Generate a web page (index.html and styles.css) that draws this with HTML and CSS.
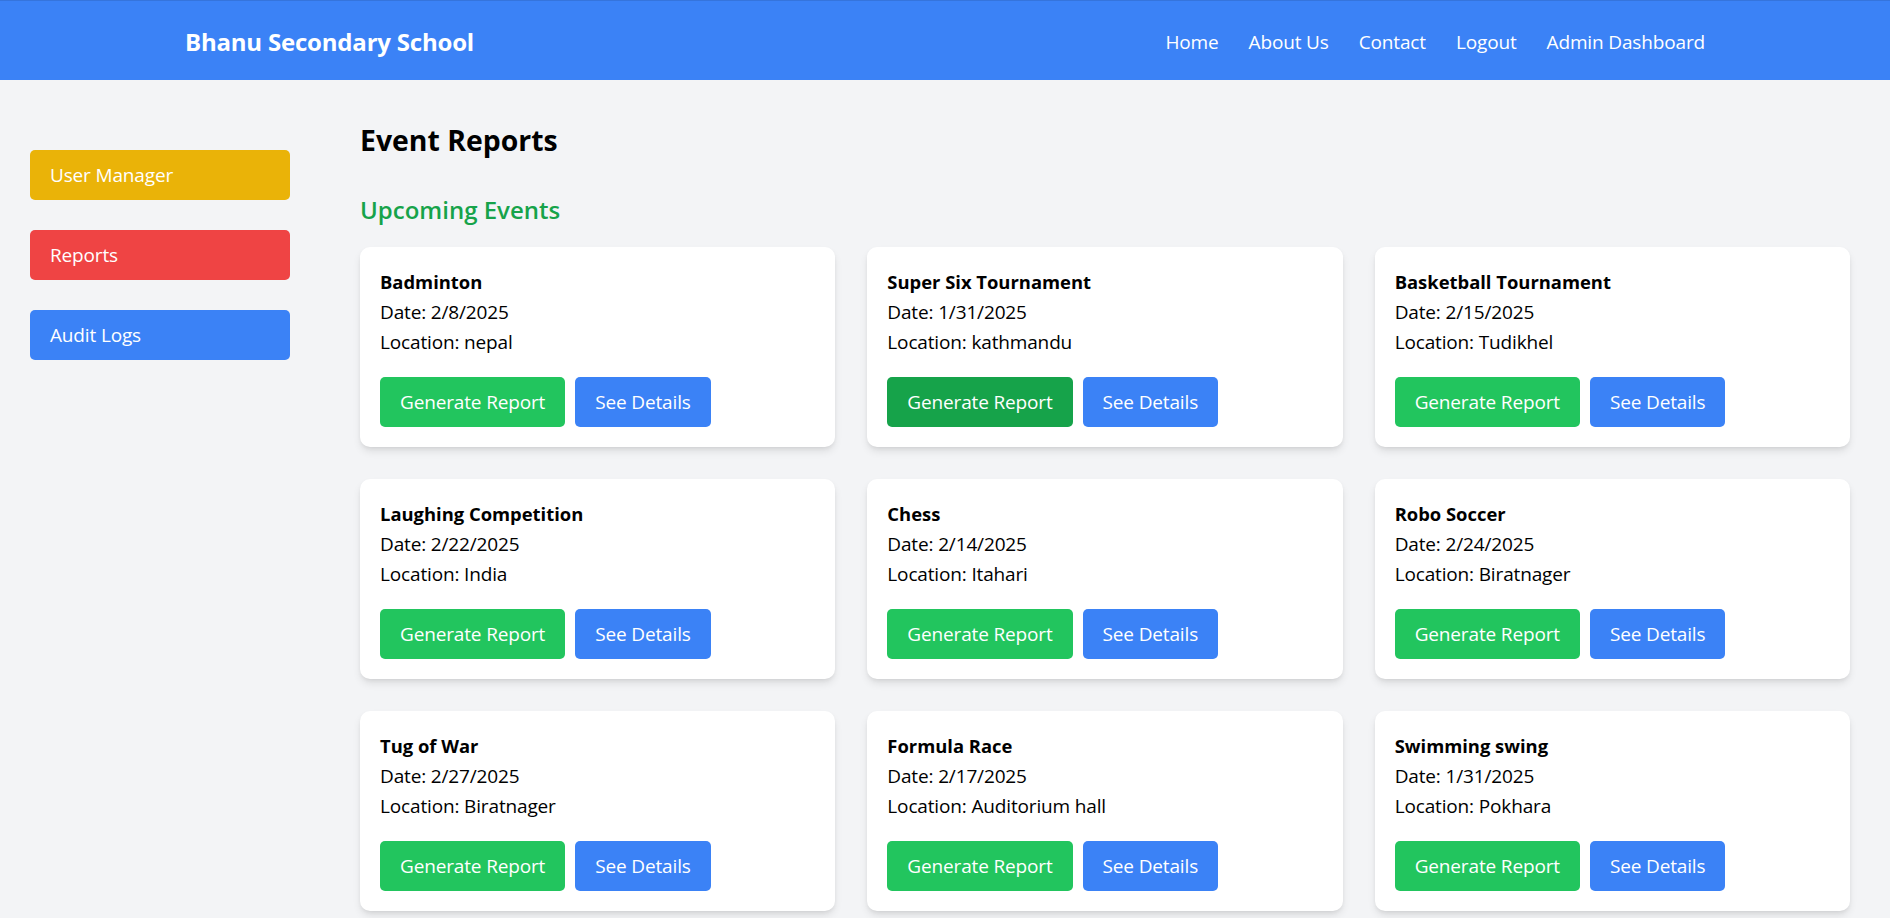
FILE: index.html
```html
<!DOCTYPE html>
<html lang="en">
<head>
<meta charset="utf-8">
<title>Event Reports</title>
<link rel="stylesheet" href="styles.css">
</head>
<body>
<header class="topbar">
  <div class="container">
    <div class="brand">Bhanu Secondary School</div>
    <nav class="nav">
      <a href="#">Home</a>
      <a href="#">About Us</a>
      <a href="#">Contact</a>
      <a href="#">Logout</a>
      <a href="#">Admin Dashboard</a>
    </nav>
  </div>
</header>
<div class="layout">
  <aside class="sidebar">
    <a class="side-btn yellow" href="#">User Manager</a>
    <a class="side-btn red" href="#">Reports</a>
    <a class="side-btn blue" href="#">Audit Logs</a>
  </aside>
  <main class="main">
    <h1 class="page-title">Event Reports</h1>
    <h2 class="section-title">Upcoming Events</h2>
    <div class="grid">
      <div class="card">
        <h3 class="card-title">Badminton</h3>
        <p>Date: 2/8/2025</p>
        <p>Location: nepal</p>
        <div class="actions"><button class="btn green">Generate Report</button><button class="btn blue">See Details</button></div>
      </div>
      <div class="card">
        <h3 class="card-title">Super Six Tournament</h3>
        <p>Date: 1/31/2025</p>
        <p>Location: kathmandu</p>
        <div class="actions"><button class="btn green hover">Generate Report</button><button class="btn blue">See Details</button></div>
      </div>
      <div class="card">
        <h3 class="card-title">Basketball Tournament</h3>
        <p>Date: 2/15/2025</p>
        <p>Location: Tudikhel</p>
        <div class="actions"><button class="btn green">Generate Report</button><button class="btn blue">See Details</button></div>
      </div>
      <div class="card">
        <h3 class="card-title">Laughing Competition</h3>
        <p>Date: 2/22/2025</p>
        <p>Location: India</p>
        <div class="actions"><button class="btn green">Generate Report</button><button class="btn blue">See Details</button></div>
      </div>
      <div class="card">
        <h3 class="card-title">Chess</h3>
        <p>Date: 2/14/2025</p>
        <p>Location: Itahari</p>
        <div class="actions"><button class="btn green">Generate Report</button><button class="btn blue">See Details</button></div>
      </div>
      <div class="card">
        <h3 class="card-title">Robo Soccer</h3>
        <p>Date: 2/24/2025</p>
        <p>Location: Biratnager</p>
        <div class="actions"><button class="btn green">Generate Report</button><button class="btn blue">See Details</button></div>
      </div>
      <div class="card">
        <h3 class="card-title">Tug of War</h3>
        <p>Date: 2/27/2025</p>
        <p>Location: Biratnager</p>
        <div class="actions"><button class="btn green">Generate Report</button><button class="btn blue">See Details</button></div>
      </div>
      <div class="card">
        <h3 class="card-title">Formula Race</h3>
        <p>Date: 2/17/2025</p>
        <p>Location: Auditorium hall</p>
        <div class="actions"><button class="btn green">Generate Report</button><button class="btn blue">See Details</button></div>
      </div>
      <div class="card">
        <h3 class="card-title">Swimming swing</h3>
        <p>Date: 1/31/2025</p>
        <p>Location: Pokhara</p>
        <div class="actions"><button class="btn green">Generate Report</button><button class="btn blue">See Details</button></div>
      </div>
    </div>
  </main>
</div>
</body>
</html>
```
FILE: styles.css
```css
* { box-sizing: border-box; }
html, body { margin: 0; padding: 0; }
body {
  font-family: "Segoe UI", "Open Sans", "Noto Sans", sans-serif;
  font-size: 19px;
  letter-spacing: -0.15px;
  line-height: 30px;
  color: #000;
  background: #f3f4f6;
}
a { text-decoration: none; color: inherit; }
h1, h2, h3, p { margin: 0; }

.topbar {
  background: #3b82f6;
  height: 80px;
  color: #fff;
  border-top: 1px solid #3574dc;
}
.container {
  max-width: 1600px;
  margin: 0 auto;
  padding: 2px 40px 0;
  height: 100%;
  display: flex;
  align-items: center;
  justify-content: space-between;
}
.brand {
  font-size: 24px;
  font-weight: 700;
  line-height: 35px;
  letter-spacing: -0.2px;
}
.nav {
  display: flex;
  gap: 30px;
  font-size: 19px;
}

.layout {
  display: flex;
}
.sidebar {
  width: 320px;
  flex: 0 0 320px;
  padding: 70px 30px 30px;
  display: flex;
  flex-direction: column;
  gap: 30px;
}
.side-btn {
  display: block;
  color: #fff;
  padding: 10px 20px;
  border-radius: 5px;
  line-height: 30px;
}
.side-btn.yellow { background: #eab308; }
.side-btn.red { background: #ef4444; }
.side-btn.blue { background: #3b82f6; }

.main {
  flex: 1;
  padding: 40px;
}
.page-title {
  font-size: 28.4px;
  line-height: 40px;
  font-weight: 700;
  letter-spacing: 0;
  margin-bottom: 32px;
}
.section-title {
  font-size: 24px;
  line-height: 35px;
  font-weight: 600;
  letter-spacing: 0;
  color: #16a34a;
  margin-bottom: 20px;
}
.grid {
  display: grid;
  grid-template-columns: repeat(3, 1fr);
  gap: 32px;
}
.card {
  background: #fff;
  border-radius: 10px;
  padding: 20px;
  box-shadow: 0 5px 8px -1px rgba(0,0,0,0.1), 0 2px 5px -2px rgba(0,0,0,0.1);
}
.card-title {
  font-size: 18.4px;
  line-height: 30px;
  font-weight: 700;
  letter-spacing: 0;
}
.actions {
  margin-top: 20px;
  display: flex;
  gap: 10px;
}
.btn {
  font: inherit;
  letter-spacing: inherit;
  color: #fff;
  border: 0;
  border-radius: 5px;
  padding: 10px 20px;
  line-height: 30px;
  cursor: pointer;
}
.btn.green { background: #22c55e; }
.btn.green.hover { background: #16a34a; }
.btn.blue { background: #3b82f6; }
```
